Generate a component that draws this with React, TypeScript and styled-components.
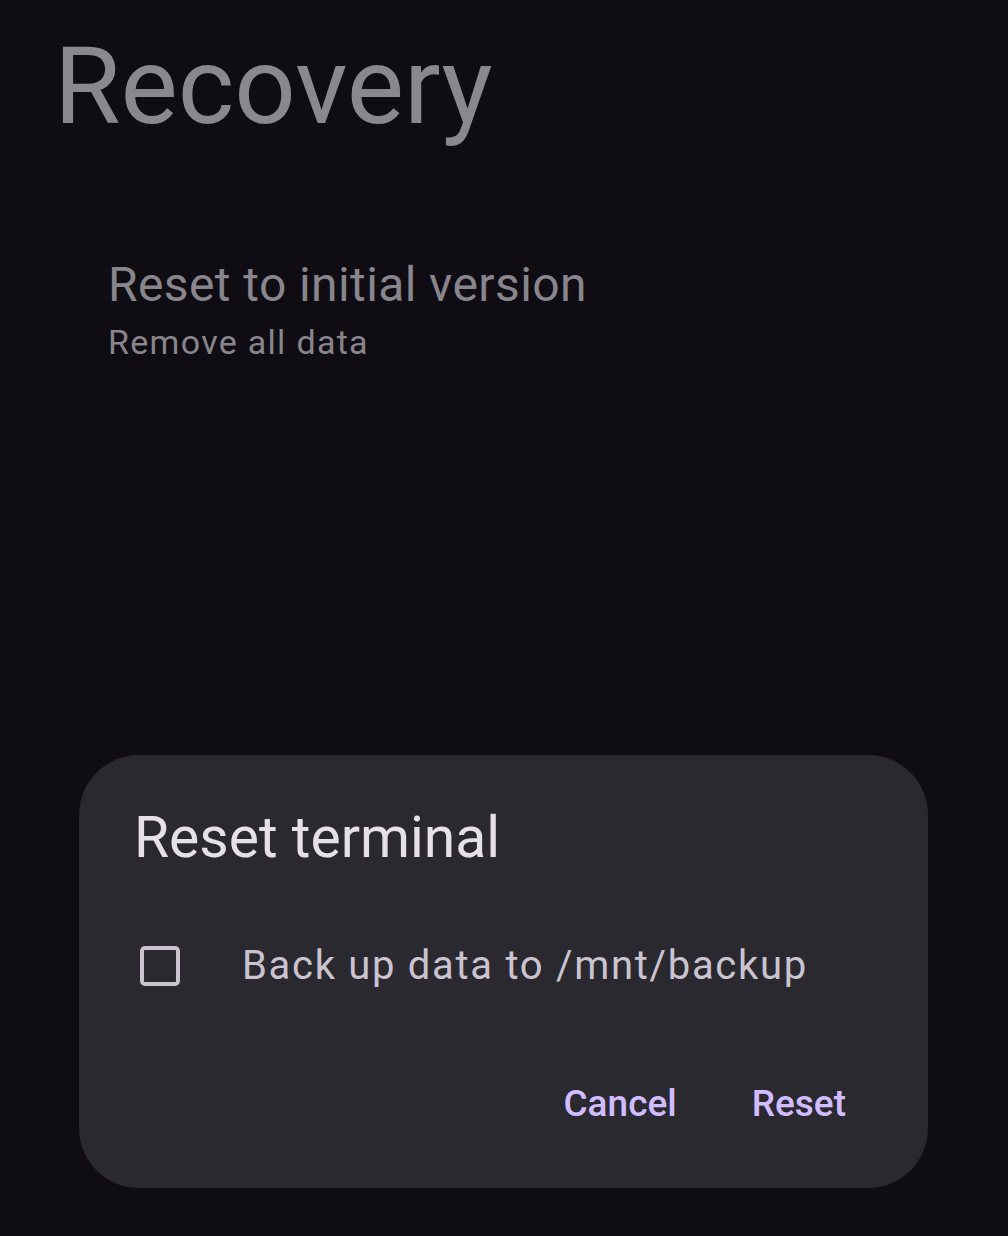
import { createGlobalStyle, styled } from "styled-components";

const Global = createGlobalStyle`
  html, body {
    margin: 0;
    padding: 0;
    background: #0f0d13;
  }
  body {
    font-family: Roboto, "Noto Sans", sans-serif;
  }
`;

export default function App() {
  return (
    <>
      <Global />
      <Page>
        <Title>Recovery</Title>
        <Item>
          <ItemTitle>Reset to initial version</ItemTitle>
          <ItemSub>Remove all data</ItemSub>
        </Item>
        <Spacer />
        <Dialog>
          <DialogTitle>Reset terminal</DialogTitle>
          <CheckRow>
            <Box />
            <CheckLabel>Back up data to /mnt/backup</CheckLabel>
          </CheckRow>
          <Actions>
            <TextButton>Cancel</TextButton>
            <TextButton>Reset</TextButton>
          </Actions>
        </Dialog>
      </Page>
    </>
  );
}

const Page = styled.div`
  width: 1008px;
  height: 1236px;
  display: flex;
  flex-direction: column;
  overflow: hidden;
`;

const Title = styled.h1`
  margin: 16px 0 0 54px;
  font-size: 108px;
  font-weight: 400;
  line-height: 140px;
  color: #8a888e;
`;

const Item = styled.div`
  display: flex;
  flex-direction: column;
  padding: 98px 0 0 108px;
`;

const ItemTitle = styled.div`
  font-size: 48px;
  line-height: 62px;
  color: #88868c;
  letter-spacing: 0.4px;
`;

const ItemSub = styled.div`
  margin-top: 6px;
  font-size: 34px;
  line-height: 40px;
  color: #88868c;
  letter-spacing: 1.3px;
`;

const Spacer = styled.div`
  flex: 1;
`;

const Dialog = styled.div`
  margin: 0 80px 48px 79px;
  height: 433px;
  box-sizing: border-box;
  background: #2b2930;
  border-radius: 60px;
  padding: 44px 80px 0 55px;
  display: flex;
  flex-direction: column;
`;

const DialogTitle = styled.div`
  font-size: 57px;
  line-height: 78px;
  color: #e6e0e9;
`;

const CheckRow = styled.div`
  display: flex;
  align-items: center;
  margin-top: 64px;
  padding-left: 6px;
`;

const Box = styled.div`
  width: 40px;
  height: 40px;
  box-sizing: border-box;
  border: 4px solid #cac4d0;
  border-radius: 5px;
  margin-right: 62px;
`;

const CheckLabel = styled.div`
  font-size: 40px;
  line-height: 50px;
  color: #cac4d0;
  letter-spacing: 1.7px;
`;

const Actions = styled.div`
  display: flex;
  justify-content: flex-end;
  gap: 75px;
  margin-top: 88px;
  padding-right: 2px;
`;

const TextButton = styled.div`
  font-size: 37px;
  font-weight: 500;
  line-height: 50px;
  color: #d0bcff;
`;
